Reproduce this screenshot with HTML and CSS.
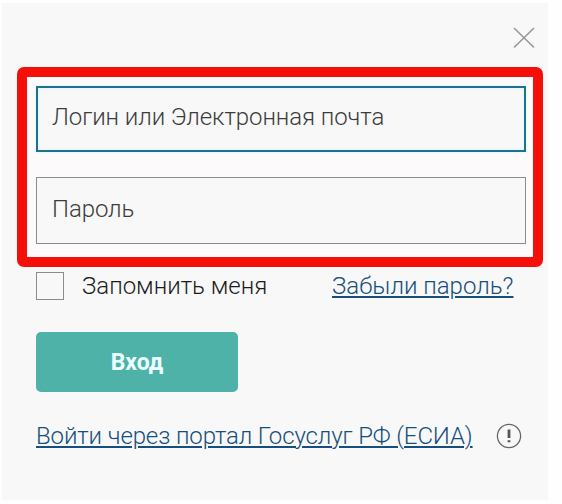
FILE: index.html
```
<!DOCTYPE html>
<html lang="ru">
<head>
<meta charset="utf-8">
<title>Вход</title>
<link rel="stylesheet" href="styles.css">
</head>
<body>
<form class="panel">
  <header class="top">
    <svg class="close" viewBox="0 0 22 22" width="22" height="22"><path d="M1 1L21 20.500M21 1L1 20.500" fill="none" stroke="#969696" stroke-width="1.500"/></svg>
  </header>
  <div class="credentials">
    <div class="field field-active"><span>Логин или Электронная почта</span></div>
    <div class="field"><span>Пароль</span></div>
  </div>
  <div class="options">
    <span class="checkbox"></span>
    <span class="remember">Запомнить меня</span>
    <a class="link forgot">Забыли пароль?</a>
  </div>
  <div class="submit"><span>Вход</span></div>
  <div class="portal">
    <a class="link esia">Войти через портал Госуслуг РФ (ЕСИА)</a>
    <svg class="info" viewBox="0 0 26 26" width="26" height="26"><circle cx="13" cy="13" r="11.600" fill="none" stroke="#666" stroke-width="1.300"/><path d="M13 6.500V15M13 17.300V19.300" fill="none" stroke="#555" stroke-width="2.800"/></svg>
  </div>
</form>
</body>
</html>
```
FILE: styles.css
```
* { box-sizing: border-box; }
body {
  margin: 0;
  padding: 3px 14px 4px 2px;
  height: 504px;
  background: #fefefe;
  font: 300 24px/30px Roboto, sans-serif;
  color: #3c3c3c;
  overflow: hidden;
}
.panel {
  height: 497px;
  padding-left: 15px;
  background: #f8f8f8;
  white-space: nowrap;
}
.top {
  display: flex;
  justify-content: flex-end;
  height: 64px;
  padding: 24px 13px 0 0;
}
.credentials {
  display: flex;
  flex-direction: column;
  gap: 25px;
  width: 526px;
  height: 200px;
  padding: 9px 7px 0 9px;
  border: 10px solid #f50f0a;
  border-radius: 7px;
  background: #fcfafa;
  letter-spacing: -0.08px;
}
.field {
  display: flex;
  align-items: center;
  height: 67px;
  padding: 0 0 3px 15px;
  border: 1px solid #8c8c8c;
  background: #f8f8f8;
}
.field-active {
  height: 66px;
  border: 2px solid #22718a;
  padding: 0 0 4px 14px;
  box-shadow: 0 0 2px #c5f4ff, inset 0 0 3px #c5f4ff;
}
.options {
  display: flex;
  height: 65px;
  padding: 4px 0 0 19px;
}
.checkbox {
  width: 28px;
  height: 28px;
  margin-top: 1px;
  border: 1px solid #8c8c8c;
}
.remember {
  margin-left: 18px;
  width: 250px;
  color: #1c1c1c;
}
.link {
  color: #164f7d;
  text-decoration: underline;
  text-decoration-thickness: 2px;
  text-underline-offset: 2px;
}
.submit {
  display: flex;
  align-items: center;
  justify-content: center;
  width: 202px;
  height: 60px;
  padding-top: 2px;
  margin-left: 19px;
  border-radius: 5px;
  background: #4eb2a9;
  color: #edffff;
  font-size: 23px;
  font-weight: 700;
}
.portal {
  display: flex;
  padding: 29px 0 0 19px;
}
.esia {
  margin-right: 23px;
  letter-spacing: -0.12px;
}
.info { margin-top: 2px; }
```
